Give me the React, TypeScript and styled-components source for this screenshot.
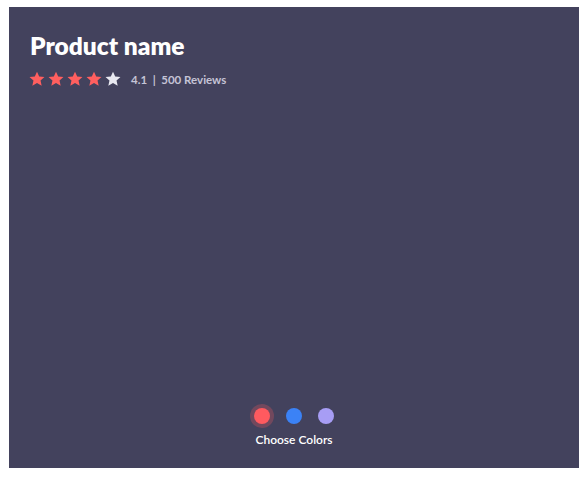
import React from "react";
import styled, { createGlobalStyle } from "styled-components";

const Global = createGlobalStyle`
  html, body { margin: 0; padding: 0; background: #fff; }
  body { font-family: "Lato", "Open Sans", sans-serif; }
`;

const Page = styled.div`
  padding: 7px 9px 12px 9px;
`;

const Card = styled.div`
  width: 570px;
  height: 461px;
  box-sizing: border-box;
  background: #43425d;
  padding: 24px 21px 20px 21px;
  display: flex;
  flex-direction: column;
`;

const Title = styled.h1`
  margin: 0;
  font-family: "Lato", sans-serif;
  font-weight: 800;
  font-size: 24.5px;
  line-height: 30px;
  color: #ffffff;
`;

const RatingRow = styled.div`
  display: flex;
  align-items: center;
  margin-top: 10px;
  gap: 10px;
`;

const Stars = styled.div`
  display: flex;
  gap: 3px;
  margin-left: -1px;
`;

const RatingText = styled.span`
  font-family: "Lato", sans-serif;
  font-size: 11.5px;
  font-weight: 700;
  color: #c5c4d6;
`;

const Spacer = styled.div`
  flex: 1;
`;

const Colors = styled.div`
  display: flex;
  flex-direction: column;
  align-items: center;
  gap: 8px;
  margin-bottom: 1px;
`;

const Swatches = styled.div`
  display: flex;
  gap: 16px;
  align-items: center;
`;

const Swatch = styled.button<{ $color: string; $active?: boolean }>`
  width: 16px;
  height: 16px;
  border-radius: 50%;
  border: none;
  padding: 0;
  background: ${(p) => p.$color};
  box-shadow: ${(p) => (p.$active ? `0 0 0 4px ${p.$color}40` : "none")};
  cursor: pointer;
`;

const Label = styled.span`
  font-family: "Lato", sans-serif;
  font-size: 12px;
  font-weight: 600;
  color: #ffffff;
`;

const Star = ({ color }: { color: string }) => (
  <svg width="16" height="16" viewBox="0 0 24 24">
    <path
      d="M12 1l3.3 7.1 7.9.9-5.9 5.3 1.7 7.8L12 18.1l-7 4 1.7-7.8L.8 9l7.9-.9z"
      fill={color}
    />
  </svg>
);

export default function App() {
  return (
    <>
      <Global />
      <Page>
        <Card>
          <Title>Product name</Title>
          <RatingRow>
            <Stars>
              {[0, 1, 2, 3].map((i) => (
                <Star key={i} color="#ff5f5f" />
              ))}
              <Star color="#e9e9f1" />
            </Stars>
            <RatingText>4.1&nbsp;&nbsp;|&nbsp;&nbsp;500 Reviews</RatingText>
          </RatingRow>
          <Spacer />
          <Colors>
            <Swatches>
              <Swatch $color="#ff5a5f" $active aria-label="red" />
              <Swatch $color="#3b82f6" aria-label="blue" />
              <Swatch $color="#a79df5" aria-label="purple" />
            </Swatches>
            <Label>Choose Colors</Label>
          </Colors>
        </Card>
      </Page>
    </>
  );
}
